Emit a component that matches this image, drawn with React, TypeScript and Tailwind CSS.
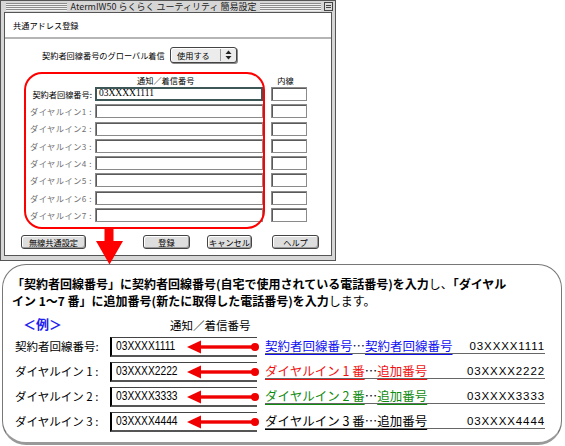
import React from 'react';

const stripe =
  "flex-1 h-[8px] bg-[repeating-linear-gradient(to_bottom,#8c8c8c_0px,#8c8c8c_1px,#f2f2f2_1px,#f2f2f2_2px)]";

const inputCls =
  "h-[14px] border border-[#8a8a8a] shadow-[inset_1px_1px_0_#5a5a5a] bg-white";

const btnCls =
  "h-[14px] flex items-center justify-center rounded-[3px] border border-[#444] bg-[#dedede] shadow-[inset_-1px_-1px_0_#9a9a9a,inset_1px_1px_0_#ffffff] text-[8.2px] leading-none whitespace-nowrap";

function Arrow() {
  return (
    <svg className="ml-auto mr-[-2px] overflow-visible shrink-0" width="72" height="14" viewBox="0 0 72 14">
      <polygon points="0,7 14,0.5 14,13.5" fill="#f00000" />
      <rect x="12" y="5.3" width="56" height="3.4" fill="#f00000" />
      <circle cx="68" cy="7" r="4" fill="#f00000" />
    </svg>
  );
}

type Part = { t: string; c: string; u?: boolean };

const exampleRows: { label: string; value: string; parts: Part[]; num: string }[] = [
  {
    label: '契約者回線番号:',
    value: '03XXXX1111',
    parts: [
      { t: '契約者回線番号', c: '#1010f0', u: true },
      { t: '…', c: '#101040' },
      { t: '契約者回線番号', c: '#1010f0', u: true },
    ],
    num: '03XXXX1111',
  },
  {
    label: 'ダイヤルイン 1 :',
    value: '03XXXX2222',
    parts: [
      { t: 'ダイヤルイン 1 番', c: '#f01010', u: true },
      { t: '…', c: '#000000' },
      { t: '追加番号', c: '#f01010', u: true },
    ],
    num: '03XXXX2222',
  },
  {
    label: 'ダイヤルイン 2 :',
    value: '03XXXX3333',
    parts: [
      { t: 'ダイヤルイン 2 番', c: '#108a10', u: true },
      { t: '…', c: '#000000' },
      { t: '追加番号', c: '#108a10', u: true },
    ],
    num: '03XXXX3333',
  },
  {
    label: 'ダイヤルイン 3 :',
    value: '03XXXX4444',
    parts: [{ t: 'ダイヤルイン 3 番…追加番号', c: '#000000', u: true }],
    num: '03XXXX4444',
  },
];

export default function App() {
  const dial = [1, 2, 3, 4, 5, 6, 7];
  return (
    <div className="relative w-[565px] h-[446px] bg-white overflow-hidden text-black font-[family-name:'Noto_Sans_CJK_JP',sans-serif]">
      {/* Mac window */}
      <div className="w-[336px] h-[261px] border border-[#555] bg-[#d6d6d6] flex flex-col">
        <div className="h-[11px] flex items-center pl-[5px] pr-[2px]">
          <div className={stripe} />
          <span className="px-[4px] text-[9px] leading-none whitespace-nowrap text-[#222]">
            AtermIW50 らくらく ユーティリティ 簡易設定
          </span>
          <div className={stripe} />
          <div className="ml-[3px] w-[9px] h-[9px] border border-[#444] bg-[#dcdcdc] flex flex-col justify-center gap-[1px] px-[1px]">
            <div className="h-px bg-[#444]" />
            <div className="h-px bg-[#444]" />
          </div>
        </div>
        <div className="mx-[3px] mb-[4px] flex-1 border border-[#555] bg-white flex flex-col">
          <div className="h-[26px] border-b-2 border-[#b5b5b5] flex items-center pl-[8px] text-[8.2px] leading-none">
            共通アドレス登録
          </div>
          <div className="relative flex-1 flex flex-col">
            <div className="mt-[8px] h-[16px] flex items-center pl-[37px]">
              <span className="w-[128px] shrink-0 text-[8.2px] leading-none whitespace-nowrap">
                契約者回線番号のグローバル着信
              </span>
              <div className="w-[67px] h-[16px] shrink-0 rounded-[3px] border border-[#444] bg-[#ececec] shadow-[1px_1px_0_#8a8a8a,inset_1px_1px_0_#fff] flex items-center">
                <span className="pl-[6px] text-[8.2px] leading-none flex-1">使用する</span>
                <div className="w-px h-[12px] bg-[#999]" />
                <svg width="15" height="12" viewBox="0 0 15 12">
                  <polygon points="7.5,1.5 10.5,5 4.5,5" fill="#222" />
                  <polygon points="7.5,10.5 10.5,7 4.5,7" fill="#222" />
                </svg>
              </div>
            </div>
            <div className="mt-[12px] h-[10px] flex items-center text-[8.2px] leading-none whitespace-nowrap">
              <span className="ml-[132px]">通知／着信番号</span>
              <span className="ml-[83px]">内線</span>
            </div>
            <div className="mt-[2px] flex flex-col gap-[3.3px]">
              <div className="h-[14px] flex items-center">
                <span className="w-[88px] shrink-0 text-right pr-[1px] text-[8.2px] leading-none whitespace-nowrap">
                  契約者回線番号:
                </span>
                <div className="ml-[2px] w-[168px] shrink-0 h-[14px] border-2 border-[#3d5656] bg-white flex items-center pl-[2px]">
                  <span className="text-[9.5px] leading-none font-[family-name:'Liberation_Serif',serif]">
                    03XXXX1111
                  </span>
                </div>
                <div className={`ml-[8px] w-[36px] shrink-0 ${inputCls}`} />
              </div>
              {dial.map((n) => (
                <div key={n} className="h-[14px] flex items-center">
                  <span className="w-[88px] shrink-0 text-right pr-[1px] text-[8.2px] leading-none whitespace-nowrap text-[#707070] tracking-[0.5px]">
                    ダイヤルイン{n} :
                  </span>
                  <div className={`ml-[2px] w-[168px] shrink-0 ${inputCls}`} />
                  <div className={`ml-[8px] w-[36px] shrink-0 ${inputCls}`} />
                </div>
              ))}
            </div>
            <div className="mt-[13px] flex">
              <div className={`ml-[16px] w-[65px] shrink-0 ${btnCls}`}>無線共通設定</div>
              <div className={`ml-[57px] w-[47px] shrink-0 ${btnCls}`}>登録</div>
              <div className={`ml-[17px] w-[45px] shrink-0 ${btnCls}`}>キャンセル</div>
              <div className={`ml-[20px] w-[47px] shrink-0 ${btnCls}`}>ヘルプ</div>
            </div>
            {/* red highlight */}
            <div className="absolute left-[19px] top-[33px] w-[241px] h-[157px] rounded-[18px] border-2 border-[#ff0000] pointer-events-none" />
          </div>
        </div>
      </div>

      {/* bubble */}
      <div className="ml-[2px] mt-[3px] w-[560px] h-[181px] border border-[#777] border-b-[3px] border-b-[#999] rounded-[24px] flex flex-col">
        <p className="pt-[10px] pl-[9px] text-[12px] leading-[17px] font-bold whitespace-nowrap">
          「契約者回線番号」に契約者回線番号(自宅で使用されている電話番号)を入力<span className="font-normal">し、</span>「ダイヤル
          <br />
          イン 1～7 番」に追加番号(新たに取得した電話番号)を入力<span className="font-normal">します。</span>
        </p>
        <div className="mt-[7px] h-[16px] flex items-end whitespace-nowrap">
          <span className="ml-[20px] w-[147px] shrink-0 text-[13px] leading-[16px] font-bold text-[#2020f0]">＜例＞</span>
          <span className="text-[11.5px] leading-[14px]">通知／着信番号</span>
        </div>
        <div className="mt-[5px] flex flex-col gap-[5px]">
          {exampleRows.map((r) => (
            <div key={r.label} className="h-[20px] flex items-center">
              <span className="w-[107px] shrink-0 pl-[12px] text-[11.5px] leading-none whitespace-nowrap">{r.label}</span>
              <div className="w-[147px] shrink-0 h-[20px] border-l-2 border-l-black border-t border-t-[#444] border-b-2 border-b-[#555] flex items-center pl-[4px]">
                <span className="w-[62px] shrink-0 whitespace-nowrap inline-block origin-left scale-x-[0.82] text-[12.5px] leading-none font-[family-name:'Liberation_Sans',sans-serif]">
                  {r.value}
                </span>
                <Arrow />
              </div>
              <div className="ml-[8px] w-[280px] shrink-0 self-end mb-[3px] h-[16px] border-b border-[#666] flex items-end whitespace-nowrap">
                <span className="shrink-0 text-[12.5px] leading-[14px]">
                  {r.parts.map((p, i) => (
                    <span
                      key={i}
                      style={{ color: p.c, textDecorationColor: p.c }}
                      className={p.u ? 'underline decoration-1 underline-offset-[3px]' : ''}
                    >
                      {p.t}
                    </span>
                  ))}
                </span>
                <span className="ml-auto shrink-0 text-[11.5px] leading-[14px] tracking-[0.9px] font-[family-name:'Liberation_Sans',sans-serif]">
                  {r.num}
                </span>
              </div>
            </div>
          ))}
        </div>
      </div>

      {/* down arrow */}
      <svg className="absolute left-[96px] top-[228px]" width="27" height="37" viewBox="0 0 27 37">
        <rect x="8.5" y="0" width="9" height="14" fill="#ff0000" />
        <polygon points="0,13 27,13 13.5,36.5" fill="#ff0000" />
      </svg>
    </div>
  );
}
